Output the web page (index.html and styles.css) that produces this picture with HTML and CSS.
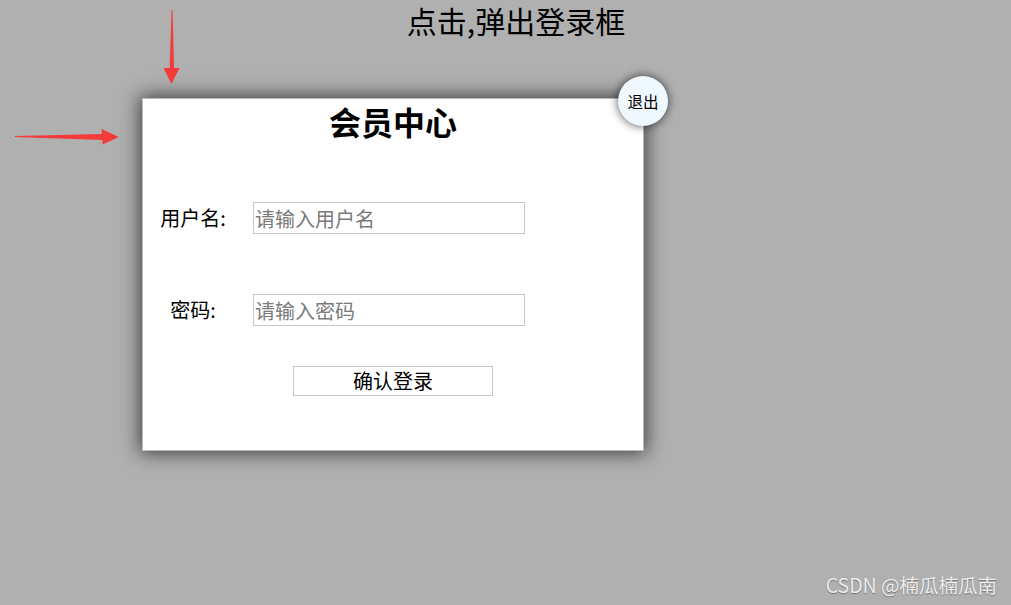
FILE: index.html
```html
<!DOCTYPE html>
<html lang="zh">
<head>
<meta charset="utf-8">
<title>会员中心</title>
<link rel="stylesheet" href="styles.css">
</head>
<body>
<h1 class="page-title">点击,弹出登录框</h1>

<div class="modal">
  <h2 class="modal-title">会员中心</h2>
  <div class="close-btn">退出</div>
  <form class="login-form">
    <div class="row">
      <label class="label">用户名:</label>
      <input class="field" type="text" placeholder="请输入用户名">
    </div>
    <div class="row">
      <label class="label">密码:</label>
      <input class="field" type="password" placeholder="请输入密码">
    </div>
    <div class="actions">
      <button class="submit" type="button">确认登录</button>
    </div>
  </form>
</div>

<svg class="arrows" width="200" height="160" viewBox="0 0 200 160" xmlns="http://www.w3.org/2000/svg">
  <polygon fill="#f53a3a" points="171.6,10 172.6,10 174,68 179.5,68 171.5,84 163.5,68 169.6,68"/>
  <polygon fill="#f53a3a" points="15,136 102,134 101.5,129 119,137 102.5,144.5 102.5,140 15,137"/>
</svg>

<div class="watermark">CSDN @楠瓜楠瓜南</div>
</body>
</html>
```

FILE: styles.css
```css
* { box-sizing: border-box; }

html, body {
  margin: 0;
  padding: 0;
  width: 1011px;
  height: 605px;
  overflow: hidden;
}

body {
  background: #b0b0b0;
  font-family: "Noto Sans CJK SC", "Liberation Sans", sans-serif;
  color: #000;
  position: relative;
}

.page-title {
  margin: 0;
  padding-top: 1px;
  padding-left: 21px;
  font-size: 30px;
  font-weight: normal;
  line-height: 38px;
  text-align: center;
}

.modal {
  position: absolute;
  left: 142px;
  top: 98px;
  width: 502px;
  height: 353px;
  background: #fff;
  border: 1px solid #bbb;
  box-shadow: 0 0 18px 2px rgba(0, 0, 0, 0.65);
  padding-top: 2px;
}

.modal-title {
  margin: 0;
  font-size: 32px;
  font-weight: bold;
  line-height: 40px;
  text-align: center;
}

.close-btn {
  position: absolute;
  right: -25px;
  top: -23px;
  width: 50px;
  height: 50px;
  border-radius: 50%;
  background: #f0f8ff;
  box-shadow: 0 0 8px 1px rgba(0, 0, 0, 0.55);
  font-size: 15.5px;
  line-height: 50px;
  text-align: center;
}

.login-form {
  margin-top: 61px;
  display: flex;
  flex-direction: column;
  gap: 60px;
}

.row {
  display: grid;
  grid-template-columns: 100px 272px;
  column-gap: 10px;
  align-items: center;
}

.label {
  font-size: 20px;
  line-height: 32px;
  text-align: center;
}

.field {
  width: 272px;
  height: 32px;
  margin: 0;
  padding: 0 1px;
  border: 1px solid #c8c8c8;
  font-family: inherit;
  font-size: 20px;
  outline: none;
}

.field::placeholder {
  color: #7a7a7a;
}

.actions {
  margin-top: -20px;
  padding-left: 150px;
}

.submit {
  width: 200px;
  height: 30px;
  margin: 0;
  padding: 0;
  background: #fff;
  border: 1px solid #c8c8c8;
  font-family: inherit;
  font-size: 20px;
  line-height: 28px;
  color: #000;
}

.arrows {
  position: absolute;
  left: 0;
  top: 0;
}

.watermark {
  position: absolute;
  right: 14px;
  bottom: 7px;
  font-size: 19.5px;
  line-height: 26px;
  color: #ececec;
  text-shadow: 0 1px 1px rgba(0, 0, 0, 0.35);
}
```
